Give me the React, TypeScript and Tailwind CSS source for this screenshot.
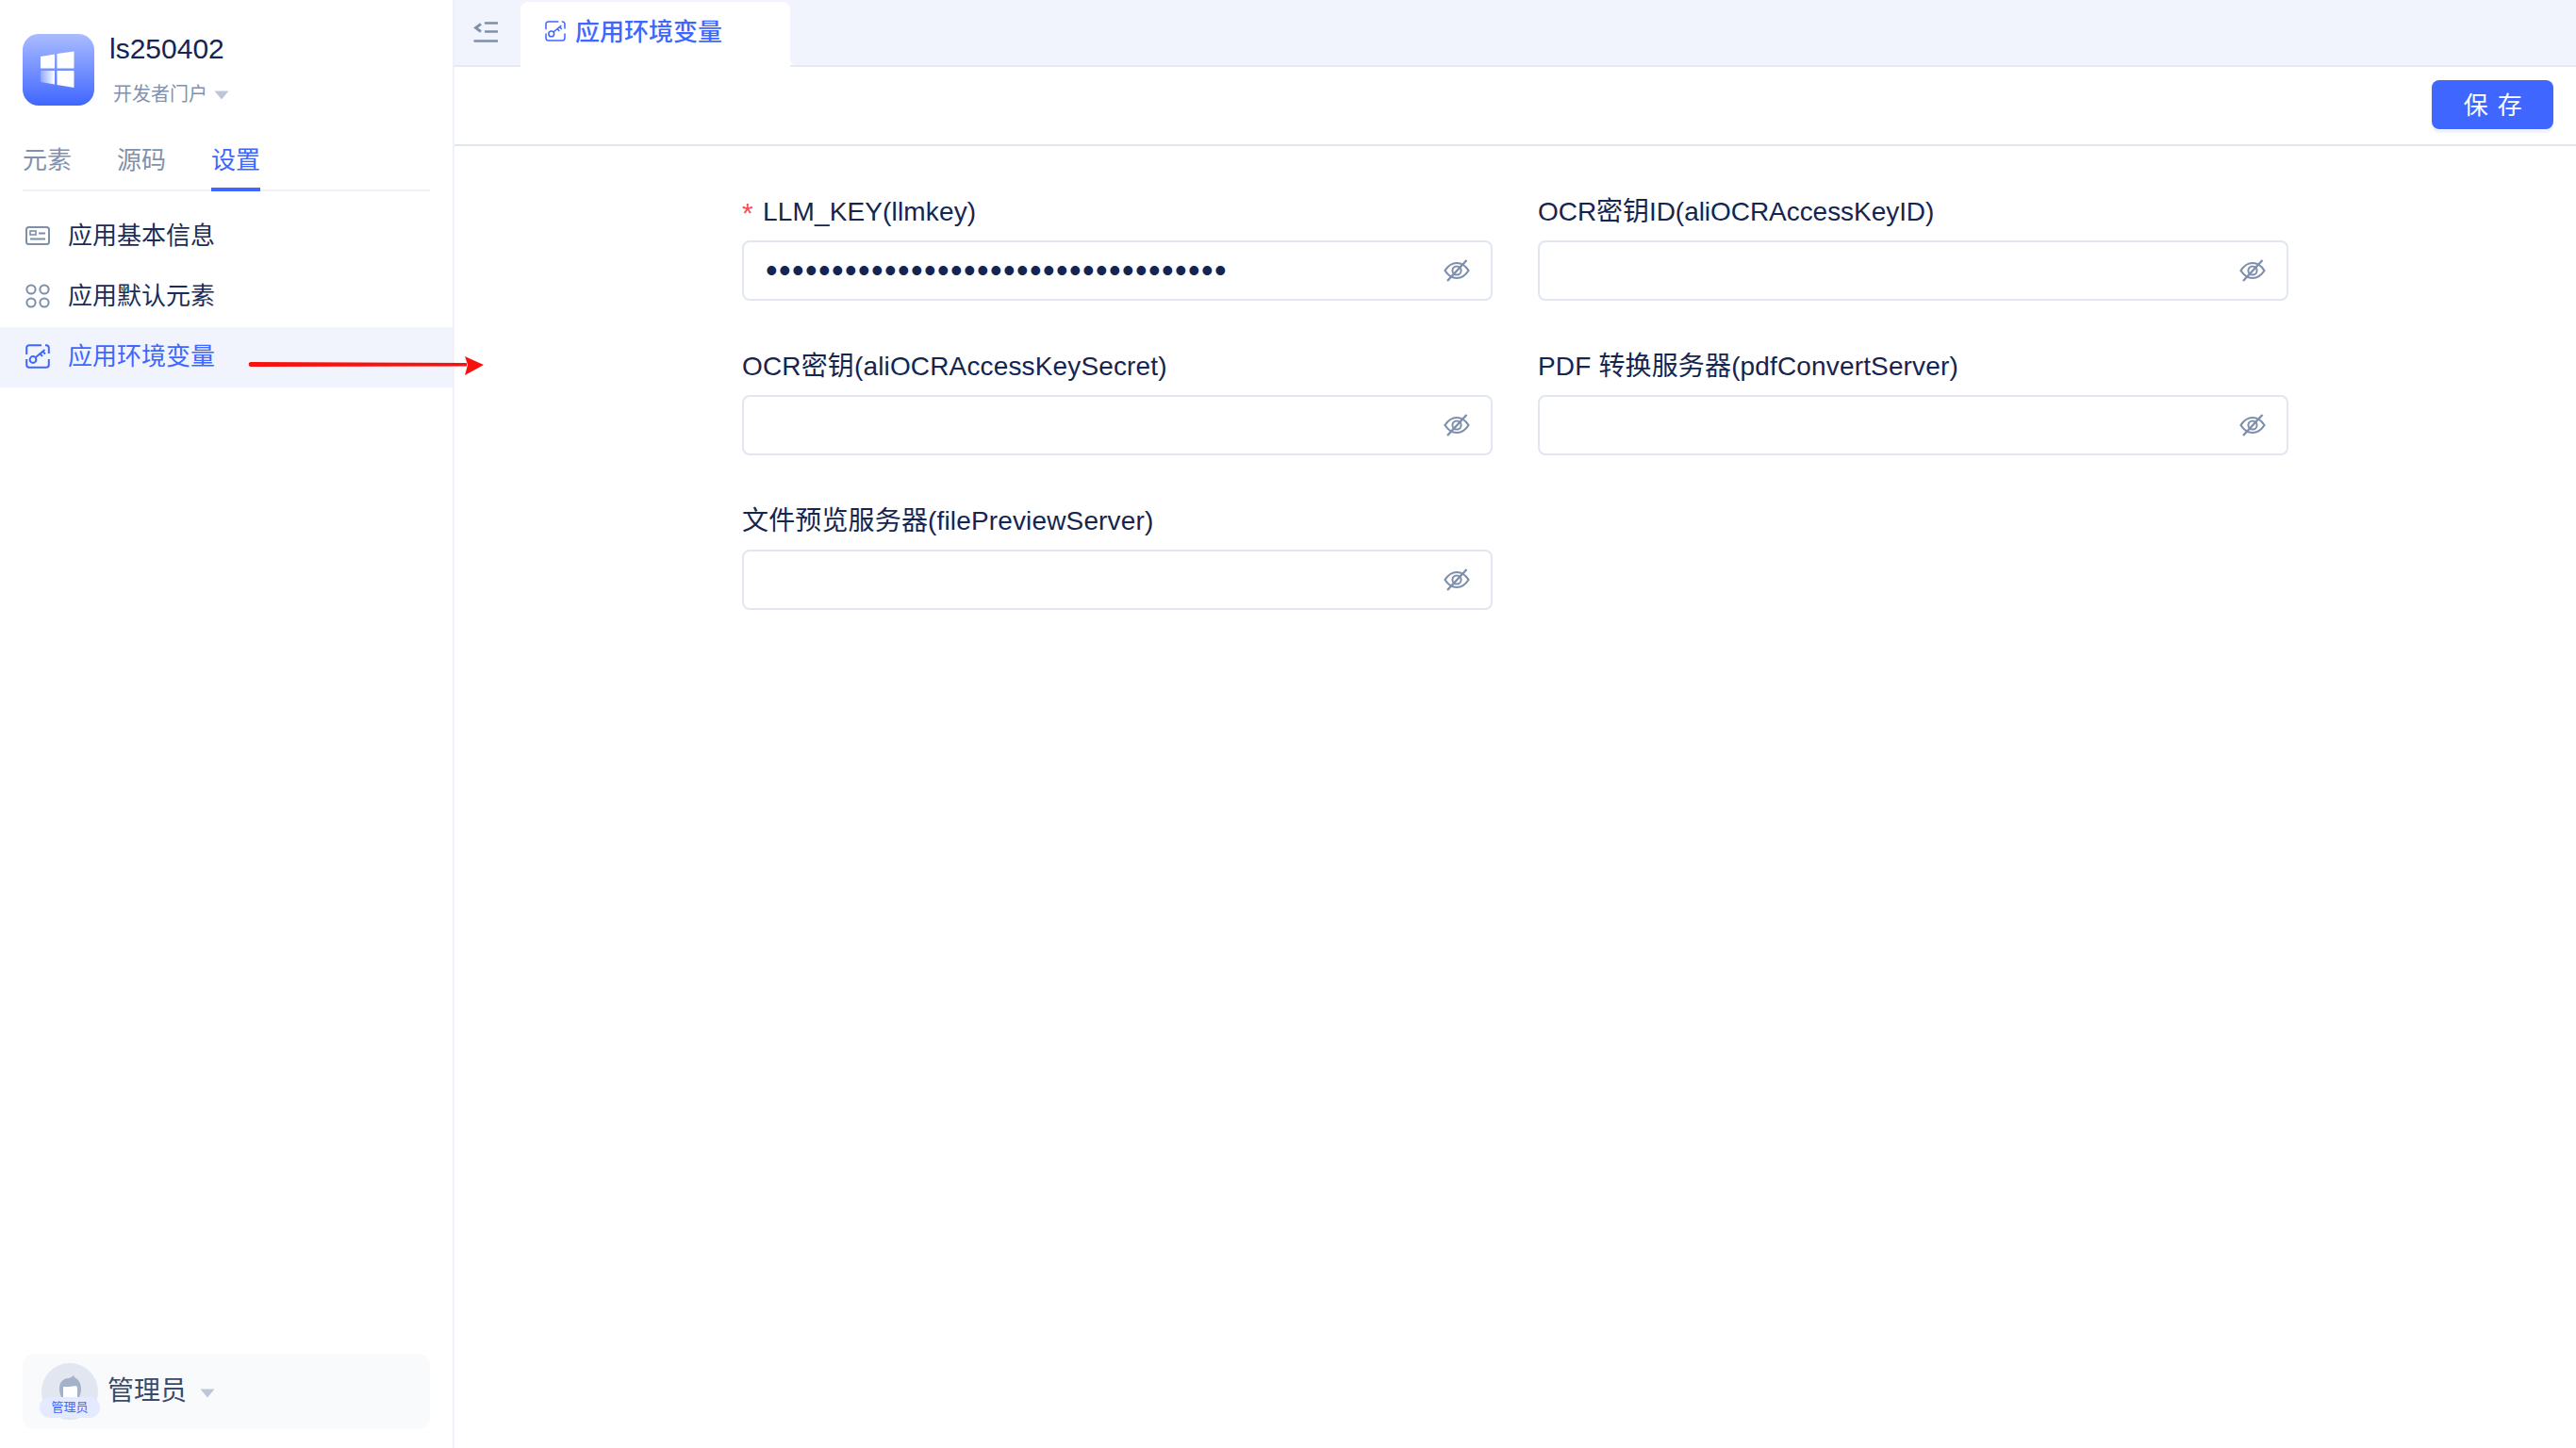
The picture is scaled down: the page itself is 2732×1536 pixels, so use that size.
import React from "react";

const FONT = { fontFamily: '"Liberation Sans", "Noto Sans CJK SC", sans-serif' };

function Caret({ className }: { className: string }) {
  return (
    <svg className={className} width="16" height="10" viewBox="0 0 16 10">
      <path d="M0.5 0.5H15.5L8 9.5Z" fill="#bdc6d8" />
    </svg>
  );
}

function Logo() {
  return (
    <svg width="76" height="76" viewBox="0 0 76 76" className="shrink-0">
      <defs>
        <linearGradient id="lg" x1="0" y1="0" x2="0" y2="1">
          <stop offset="0" stopColor="#aabcff" />
          <stop offset="1" stopColor="#3f66ff" />
        </linearGradient>
        <linearGradient id="pane" x1="0" y1="0" x2="1" y2="0">
          <stop offset="0" stopColor="#ffffff" stopOpacity="0.25" />
          <stop offset="1" stopColor="#ffffff" />
        </linearGradient>
      </defs>
      <rect width="76" height="76" rx="17" fill="url(#lg)" />
      <polygon points="19,24 34,21.5 34,36.5 19,36.5" fill="#fff" />
      <polygon points="36.5,21 54.5,18.5 54.5,36.5 36.5,36.5" fill="#fff" />
      <polygon points="19,39 34,39 34,53.5 19,51" fill="url(#pane)" />
      <polygon points="36.5,39 54.5,39 54.5,57 36.5,54" fill="#fff" />
    </svg>
  );
}

function CardIcon() {
  return (
    <svg width="26" height="20" viewBox="0 0 26 20" fill="none" stroke="#7e8fab" strokeWidth="2" className="shrink-0">
      <rect x="1" y="1" width="24" height="18" rx="2.5" />
      <rect x="5" y="5" width="6" height="4" strokeWidth="1.6" />
      <path d="M14 7.5H21M5 13.5H21" strokeWidth="1.8" />
    </svg>
  );
}

function DotsIcon() {
  return (
    <svg width="26" height="26" viewBox="0 0 26 26" fill="none" stroke="#7e8fab" strokeWidth="2" className="shrink-0">
      <circle cx="6" cy="6" r="4.6" />
      <circle cx="20" cy="6" r="4.6" />
      <circle cx="6" cy="20" r="4.6" />
      <circle cx="20" cy="20" r="4.6" />
    </svg>
  );
}

function KeyIcon({ size, width }: { size: number; width: number }) {
  return (
    <svg width={size} height={size} viewBox="0 0 26 26" fill="none" stroke="#3f66ff" strokeWidth={width} className="shrink-0">
      <path d="M17 1.2H4a2.8 2.8 0 0 0-2.8 2.8V11M1.2 16V22a2.8 2.8 0 0 0 2.8 2.8H22a2.8 2.8 0 0 0 2.8-2.8V16M24.8 10V4A2.8 2.8 0 0 0 22 1.2H21" />
      <circle cx="8" cy="16.5" r="3.4" />
      <path d="M10.6 14.2L20.5 6M15.5 10.2L18 13M18.5 7.8L21 10.6" />
    </svg>
  );
}

function EyeOff() {
  return (
    <svg width="28" height="24" viewBox="0 0 28 24" fill="none" stroke="#7e8fab" className="shrink-0">
      <path d="M1.5 12C5 6.5 9.2 4 14 4s9 2.5 12.5 8c-3.5 5.5-7.7 8-12.5 8S5 17.500 1.500 12Z" strokeWidth="2.200" />
      <circle cx="14" cy="12" r="4.600" strokeWidth="2" />
      <path d="M4 23L24.500 1" strokeWidth="2.400" />
    </svg>
  );
}

function Field({ label, required, value, labelClass }: { label: string; required?: boolean; value?: string; labelClass?: string }) {
  return (
    <div className="flex flex-col">
      <div className={`flex h-10 items-center mb-[10px] text-[28px] text-[#14254f] whitespace-pre ${labelClass ?? "tracking-[0.15px]"}`}>
        {required && <span className="text-[#f5504f] w-[22px] text-[30px]">*</span>}
        {label}
      </div>
      <div className="relative">
        <input
          type="password"
          readOnly
          value={value ?? ""}
          style={FONT}
          className="w-full h-16 rounded-lg border-2 border-[#e1e6f0] bg-white pl-[23px] pr-16 text-[36px] tracking-[1.4px] text-[#14254f] outline-none"
        />
        <div className="absolute right-[24px] top-[20px]">
          <EyeOff />
        </div>
      </div>
    </div>
  );
}

function NavRow({ icon, label, active }: { icon: React.ReactNode; label: string; active?: boolean }) {
  return (
    <div className={`flex h-16 items-center pb-[2px] pl-[27px] text-[26px] ${active ? "bg-[#f1f4fc] text-[#3f66ff]" : "text-[#1b2c55]"}`}>
      <span className="w-[45px] flex items-center">{icon}</span>
      {label}
    </div>
  );
}

export default function App() {
  return (
    <div style={FONT} className="relative flex h-[1536px] w-[2732px] overflow-hidden bg-white">
      <aside className="flex w-[482px] shrink-0 flex-col border-r-2 border-[#eef1f7]">
        <div className="flex items-start gap-[16px] pl-6 pt-9">
          <Logo />
          <div className="flex flex-col">
            <div className="mt-[-1px] h-[34px] text-[30px] leading-[34px] text-[#14254f]">ls250402</div>
            <div className="mt-[17px] ml-[4px] flex items-center gap-[7px] text-[20px] leading-[28px] text-[#8291ab]">
              开发者门户
              <Caret className="mt-[2px]" />
            </div>
          </div>
        </div>
        <div className="mx-6 mt-[35px] flex h-[54px] gap-12 border-b-2 border-[#eef1f7] text-[26px] leading-[42px] text-[#8291ab]">
          <div>元素</div>
          <div>源码</div>
          <div className="h-[54px] border-b-4 border-[#3f66ff] text-[#3f66ff]">设置</div>
        </div>
        <div className="mt-4 flex flex-col">
          <NavRow icon={<CardIcon />} label="应用基本信息" />
          <NavRow icon={<DotsIcon />} label="应用默认元素" />
          <NavRow icon={<KeyIcon size={26} width={2} />} label="应用环境变量" active />
        </div>
        <div className="mx-6 mb-5 mt-auto flex h-20 items-center rounded-xl bg-[#f9fafc] pl-5">
          <div className="relative h-[60px] w-[60px] shrink-0 rounded-full bg-[#e1e6f0]">
            <svg width="60" height="60" viewBox="0 0 60 60" className="absolute left-0 top-0">
              <path d="M19 27c0-7 4-11 10-11 2 0 4-3 6-3-1 1 0 2 0 2 4 2 7 6 7 12 0 4-1 7-2 9H21c-1-2-2-5-2-9Z" fill="#a5b1c8" />
              <path d="M23 25c3 0 9 0 14-1 1 1 1 3 1 4v10H23Z" fill="#fff" />
            </svg>
            <div className="absolute left-[-2px] top-[36px] flex h-[22px] w-16 items-center justify-center rounded-full bg-[#e4eaff] text-[13px] text-[#4066ff]">
              管理员
            </div>
          </div>
          <div className="ml-[10px] text-[28px] text-[#3a4a6b]">管理员</div>
          <Caret className="ml-[14px] mt-[4px]" />
        </div>
      </aside>

      <main className="flex min-w-0 flex-1 flex-col">
        <div className="flex h-[71px] shrink-0 items-stretch border-b-2 border-[#e6e9f2] bg-[#f1f4fc]">
          <div className="flex w-[70px] items-center pb-[2px] pl-[20px]">
            <svg width="26" height="22" viewBox="0 0 26 22" fill="none" stroke="#7e8fab" strokeWidth="2.500">
              <path d="M8 2.500L2.500 6.500L8 10.500" strokeWidth="2.800" />
              <path d="M13 1.500H25.500M13 10.500H25.500M1.500 20.500H25.500" strokeLinecap="round" />
            </svg>
          </div>
          <div className="relative mt-[2px] flex h-[69px] w-[286px] items-start rounded-t-lg bg-white pl-[26px] pt-[15px] text-[26px] font-medium leading-[34px] text-[#3f66ff]">
            <span className="mr-[10px] mt-[5px]">
              <KeyIcon size={22} width={1.800} />
            </span>
            应用环境变量
            <div className="absolute bottom-[2px] right-[-6px] h-[6px] w-[6px] bg-white">
              <div className="h-full w-full rounded-bl-[6px] bg-[#f1f4fc]" />
            </div>
          </div>
        </div>
        <div className="flex h-[84px] shrink-0 items-center justify-end border-b-2 border-[#e1e5ee] pb-[2px] pr-6">
          <button className="h-[52px] w-[129px] rounded-lg bg-[#3f66ff] pl-[2px] pt-[2px] text-[26px] tracking-[1.500px] text-white shadow-[0_4px_0_#f1f4ff]">
            保 存
          </button>
        </div>
        <div className="mx-auto grid w-[1640px] grid-cols-2 gap-x-12 gap-y-[50px] pt-[50px]">
          <Field label="LLM_KEY(llmkey)" required value={"x".repeat(35)} />
          <Field label="OCR密钥ID(aliOCRAccessKeyID)" labelClass="tracking-[-0.05px]" />
          <Field label="OCR密钥(aliOCRAccessKeySecret)" />
          <Field label="PDF 转换服务器(pdfConvertServer)" />
          <Field label="文件预览服务器(filePreviewServer)" />
        </div>
      </main>

      <svg width="252" height="24" viewBox="0 0 252 24" className="absolute left-[263px] top-[375px]">
        <path d="M3 9L232 10V13.500L3 14C0 14 0 9 3 9Z" fill="#f7120f" />
        <path d="M230 3L250 12L230 23L233 12Z" fill="#f7120f" />
      </svg>
    </div>
  );
}
